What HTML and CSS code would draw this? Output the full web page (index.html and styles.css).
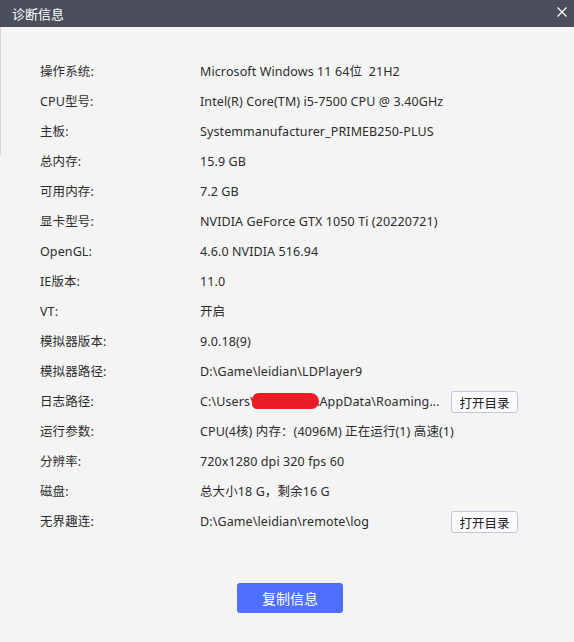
FILE: index.html
```html
<!DOCTYPE html>
<html lang="zh">
<head>
<meta charset="utf-8">
<link rel="stylesheet" href="styles.css">
</head>
<body>
<div class="window">
  <div class="titlebar">
    <span class="title">诊断信息</span>
    <svg class="close" width="10" height="10" viewBox="0 0 10 10"><path d="M0.5 0.5L9.5 9.5M9.5 0.5L0.5 9.5" stroke="#fff" stroke-width="1.2"/></svg>
  </div>
  <div class="content">
    <div class="rows">
      <div class="label">操作系统:</div><div class="value">Microsoft Windows 11 64位&nbsp;&nbsp;21H2</div><div></div>
      <div class="label">CPU型号:</div><div class="value">Intel(R) Core(TM) i5-7500 CPU @ 3.40GHz</div><div></div>
      <div class="label">主板:</div><div class="value">Systemmanufacturer_PRIMEB250-PLUS</div><div></div>
      <div class="label">总内存:</div><div class="value">15.9 GB</div><div></div>
      <div class="label">可用内存:</div><div class="value">7.2 GB</div><div></div>
      <div class="label">显卡型号:</div><div class="value">NVIDIA GeForce GTX 1050 Ti (20220721)</div><div></div>
      <div class="label">OpenGL:</div><div class="value">4.6.0 NVIDIA 516.94</div><div></div>
      <div class="label">IE版本:</div><div class="value">11.0</div><div></div>
      <div class="label">VT:</div><div class="value">开启</div><div></div>
      <div class="label">模拟器版本:</div><div class="value">9.0.18(9)</div><div></div>
      <div class="label">模拟器路径:</div><div class="value">D:\Game\leidian\LDPlayer9</div><div></div>
      <div class="label">日志路径:</div><div class="value">C:\Users\<span class="redact"></span>\AppData\Roaming...</div><div><button class="btn">打开目录</button></div>
      <div class="label">运行参数:</div><div class="value">CPU(4核) 内存：(4096M) 正在运行(1) 高速(1)</div><div></div>
      <div class="label">分辨率:</div><div class="value">720x1280 dpi 320 fps 60</div><div></div>
      <div class="label">磁盘:</div><div class="value">总大小18 G，剩余16 G</div><div></div>
      <div class="label">无界趣连:</div><div class="value">D:\Game\leidian\remote\log</div><div><button class="btn">打开目录</button></div>
    </div>
    <div class="footer"><button class="copy">复制信息</button></div>
  </div>
</div>
</body>
</html>
```
FILE: styles.css
```css
* { box-sizing: border-box; }
html, body { margin: 0; padding: 0; }
body {
  width: 574px;
  height: 642px;
  background: #f4f4f4;
  font-family: "Noto Sans", "Noto Sans CJK SC", sans-serif;
  color: #2c2c2c;
  overflow: hidden;
}
.window { position: relative; height: 642px; background: #f4f4f4; }
.window::before {
  content: "";
  position: absolute;
  left: 0; top: 27px;
  width: 1px; height: 128px;
  background: #d6d6d6;
}
.titlebar {
  height: 27px;
  background: #4a4e5d;
  display: flex;
  align-items: center;
  justify-content: space-between;
  padding: 0 7px 0 12px;
}
.title { color: #fff; font-size: 13px; font-family: "Noto Sans CJK SC", sans-serif; }
.close { display: block; margin-top: -4px; }
.content { padding: 30px 0 0 40px; }
.rows {
  display: grid;
  grid-template-columns: 160px 251px auto;
  grid-auto-rows: 30px;
  align-items: center;
  font-size: 12.5px;
  letter-spacing: 0.1px;
}
.label, .value { white-space: nowrap; line-height: 30px; }
.redact {
  display: inline-block;
  width: 67px;
  height: 16px;
  background: #ec1c24;
  border-radius: 8px 10px 9px 6px;
  vertical-align: -3px;
  margin-left: -3px;
  margin-right: -4px;
  position: relative;
}
.btn {
  height: 22px;
  width: 67px;
  padding: 0;
  font: 12.5px "Noto Sans CJK SC", sans-serif;
  color: #222;
  background: #fbfbfe;
  border: 1px solid #c4c4d4;
  border-radius: 3px;
  display: block;
}
.footer { display: flex; padding: 46px 0 0 197px; }
.copy {
  width: 106px;
  height: 30px;
  background: #4f70fe;
  color: #fff;
  border: none;
  border-radius: 3px;
  font: 14px "Noto Sans CJK SC", sans-serif;
  padding: 0;
}
```
